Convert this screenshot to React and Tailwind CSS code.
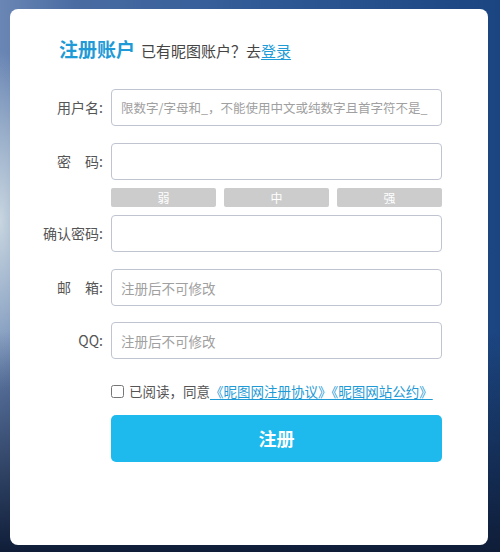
const font = { fontFamily: '"Noto Sans CJK SC", "Noto Sans", sans-serif' };

function Field({ label, placeholder, type = 'text', className = '', size = 'text-[13.5px]' }) {
  return (
    <div className={`flex items-center ${className}`}>
      <label className="w-[94px] shrink-0 text-right text-[14px] text-[#555] pr-[1px]">{label}</label>
      <input
        type={type}
        placeholder={placeholder}
        className={`ml-[7px] h-[37px] w-[331px] rounded-[4px] border border-[#bfc4d0] bg-white px-[9px] ${size} text-[#333] outline-none placeholder:text-[#a0a0a0]`}
      />
    </div>
  );
}

export default function App() {
  return (
    <div
      className="h-[552px] w-[500px] overflow-hidden pl-[10px] pt-[9px] bg-[linear-gradient(180deg,rgba(0,0,0,0)_60%,#0f1d38_100%),radial-gradient(ellipse_50px_170px_at_0%_40%,#c9d6e0_0%,rgba(180,198,214,0.6)_55%,rgba(0,0,0,0)_100%),linear-gradient(90deg,#6a86b4_0%,#4a6ca3_15%,#2d5894_55%,#1b4581_100%)]"
      style={font}
    >
      <div className="h-[536px] w-[478px] rounded-[8px] bg-white pt-[29px]">
        <div className="ml-[49px] flex items-baseline leading-[22px]">
          <span className="text-[19px] font-bold text-[#1e9ad6]">注册账户</span>
          <span className="ml-[6px] text-[15px] text-[#444]">
            已有昵图账户？去<a href="#" className="text-[#1e9ad6] underline underline-offset-2">登录</a>
          </span>
        </div>

        <Field
          label="用户名:"
          placeholder="限数字/字母和_，不能使用中文或纯数字且首字符不是_"
          size="text-[12.5px]"
          className="mt-[27px]"
        />
        <Field label="密　码:" type="password" className="mt-[17px]" />
        <div className="ml-[101px] mt-[8px] flex w-[331px] gap-[8px]">
          {['弱', '中', '强'].map((t) => (
            <div key={t} className="flex h-[19px] flex-1 items-center justify-center rounded-[2px] bg-[#cccccc] text-[12px] text-white">
              {t}
            </div>
          ))}
        </div>
        <Field label="确认密码:" type="password" className="mt-[8px]" />
        <Field label="邮　箱:" placeholder="注册后不可修改" className="mt-[17px]" />
        <Field label="QQ:" placeholder="注册后不可修改" className="mt-[16px]" />

        <div className="ml-[101px] mt-[22px] flex items-center text-[13.5px] text-[#555]">
          <input type="checkbox" className="h-[13px] w-[13px]" />
          <span className="ml-[5px]">已阅读，同意</span>
          <a href="#" className="text-[#1e9ad6] underline underline-offset-2">《昵图网注册协议》《昵图网站公约》</a>
        </div>

        <button className="ml-[101px] mt-[14px] h-[47px] w-[331px] rounded-[5px] bg-[#1fbaed] text-[18px] font-bold text-white">
          注册
        </button>
      </div>
    </div>
  );
}
